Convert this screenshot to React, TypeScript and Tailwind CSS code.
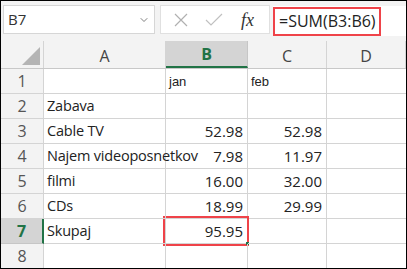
import { ChevronDown } from 'lucide-react';

// Small Excel sheet: name box, formula bar, and a 4-column grid.

const cols = [
  { key: 'A', w: 'w-[122px]' },
  { key: 'B', w: 'w-[82px]' },
  { key: 'C', w: 'w-[79px]' },
  { key: 'D', w: 'w-[79px]' },
];

type Row = { a?: string; b?: string; c?: string; small?: boolean };

const rows: Row[] = [
  { b: 'jan', c: 'feb', small: true },
  { a: 'Zabava' },
  { a: 'Cable TV', b: '52.98', c: '52.98' },
  { a: 'Najem videoposnetkov', b: '7.98', c: '11.97' },
  { a: 'filmi', b: '16.00', c: '32.00' },
  { a: 'CDs', b: '18.99', c: '29.99' },
  { a: 'Skupaj', b: '95.95' },
  {},
];

export default function App() {
  return (
    <div
      className="w-[407px] h-[269px] border border-black bg-white overflow-hidden text-[#222]"
      style={{ fontFamily: '"Open Sans", "Noto Sans", sans-serif' }}
    >
      {/* formula bar */}
      <div className="h-[40px] bg-[#f3f3f3] flex items-start pt-[4px] pl-[2px]">
        <div className="w-[152px] h-[29px] bg-white border border-[#d6d6d6] flex items-center pl-[4px] pr-[4px]">
          <span className="text-[15px] text-[#333] flex-1">B7</span>
          <ChevronDown size={12} strokeWidth={1.5} className="text-[#555]" />
        </div>
        <div className="ml-[5px] w-[110px] h-[29px] bg-white border border-[#e0e0e0] flex items-center">
          <svg width="16" height="16" viewBox="0 0 16 16" className="ml-[12px]">
            <path d="M2 2 L14 14 M14 2 L2 14" stroke="#b0b0b0" strokeWidth="1.2" fill="none" />
          </svg>
          <svg width="18" height="14" viewBox="0 0 18 14" className="ml-[16px]">
            <path d="M1 7 L6 12 L17 1" stroke="#c0c0c0" strokeWidth="1.2" fill="none" />
          </svg>
          <span
            className="ml-[18px] text-[18px] italic text-[#333] leading-none"
            style={{ fontFamily: '"Liberation Serif", serif' }}
          >
            fx
          </span>
        </div>
        <div className="ml-[3px] flex-1 h-[30px] bg-white flex items-center mt-[1px]">
          <span className="w-[108px] h-[29px] border-[2.5px] border-[#ef4349] flex items-center pl-[4px] text-[16px] text-[#222] whitespace-nowrap">
            =SUM(B3:B6)
          </span>
        </div>
      </div>

      {/* column headers */}
      <div className="flex h-[28px] bg-[#f3f3f3] border-b border-[#c8c8c8]">
        <div className="w-[43px] border-r border-[#d4d4d4] relative">
          <svg width="18" height="18" viewBox="0 0 18 18" className="absolute right-[3px] bottom-[3px]">
            <path d="M18 0 L18 18 L0 18 Z" fill="#b4b4b4" />
          </svg>
        </div>
        {cols.map((c) =>
          c.key === 'B' ? (
            <div
              key={c.key}
              className={`${c.w} bg-[#d4d4d4] border-r border-[#c6c6c6] border-b-2 border-b-[#217346] flex items-center justify-center text-[16px] font-bold text-[#217346]`}
            >
              {c.key}
            </div>
          ) : (
            <div
              key={c.key}
              className={`${c.w} border-r border-[#d4d4d4] flex items-center justify-center text-[16px] text-[#444] pt-[2px]`}
            >
              {c.key}
            </div>
          ),
        )}
      </div>

      {/* rows */}
      {rows.map((r, i) => {
        const sel = i === 6;
        return (
          <div key={i} className="flex h-[25px]">
            <div
              className={
                sel
                  ? 'w-[43px] bg-[#d4d4d4] border-b border-[#c6c6c6] border-r-2 border-r-[#217346] flex items-center justify-center text-[16px] font-bold text-[#217346]'
                  : 'w-[43px] bg-[#f3f3f3] border-b border-r border-[#d4d4d4] flex items-center justify-center text-[16px] text-[#555]'
              }
            >
              {i + 1}
            </div>
            <div className="w-[122px] border-b border-r border-[#d4d4d4] flex items-end pl-[3px] pb-[1px] text-[14.5px] tracking-[-0.2px] whitespace-nowrap overflow-visible relative z-10">
              {r.a}
            </div>
            <Cell text={r.b} small={r.small} w="w-[82px]" sel={sel} />
            <Cell text={r.c} small={r.small} w="w-[79px]" />
            <div className="w-[79px] border-b border-[#d4d4d4]" />
          </div>
        );
      })}
    </div>
  );
}

function Cell({ text, small, w, sel }: { text?: string; small?: boolean; w: string; sel?: boolean }) {
  if (small) {
    return (
      <div
        className={`${w} border-b border-r border-[#d4d4d4] flex items-center pl-[3px] pt-[1px] text-[13px] text-[#222]`}
        style={{ fontFamily: '"Liberation Sans", Arial, sans-serif' }}
      >
        {text}
      </div>
    );
  }
  return (
    <div className={`${w} border-b border-r border-[#d4d4d4] flex items-end justify-end pr-[4px] pb-[1px] text-[15px] relative`}>
      {text}
      {sel && (
        <>
          <span className="absolute left-[-3px] top-[-3px] right-[-2px] bottom-[-3px] border-[2.5px] border-[#ef4349]" />
          <span className="absolute right-[-2px] bottom-[-2px] w-[3px] h-[3px] bg-[#217346]" />
        </>
      )}
    </div>
  );
}
